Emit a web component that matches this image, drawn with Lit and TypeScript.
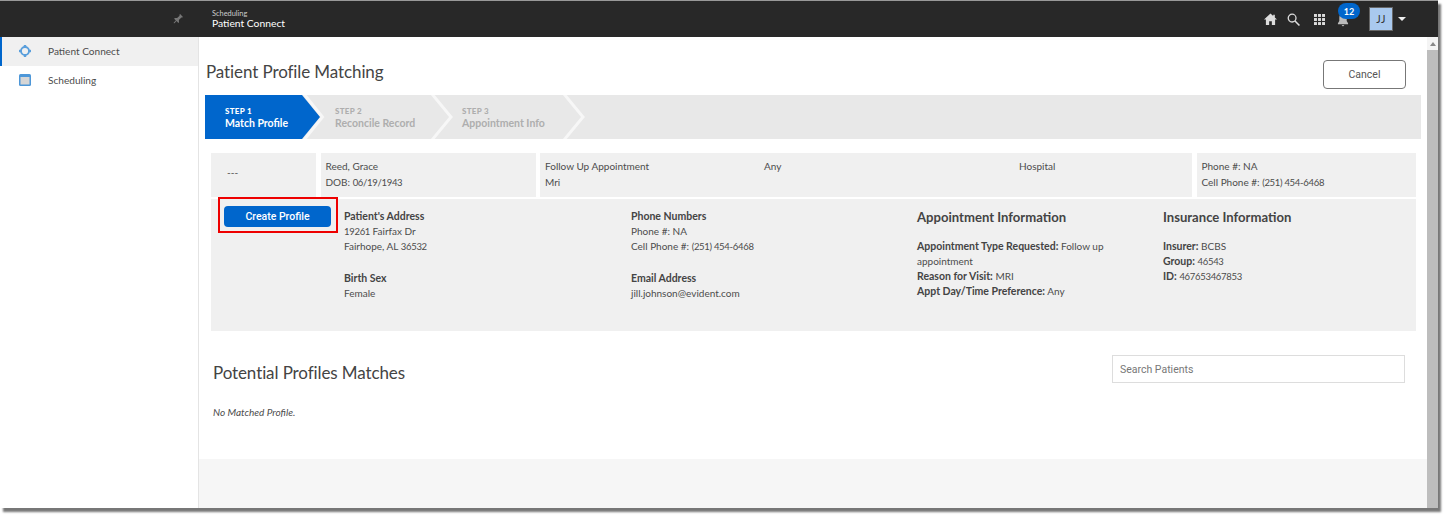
import { LitElement, html, css, svg } from "lit";
import { customElement } from "lit/decorators.js";

const chevron = (blue: boolean) => html`<svg class="chev" width="24" height="44" viewBox="0 0 24 44">
  ${blue ? svg`<polygon points="0,0 18,22 0,44" fill="#0066cc"></polygon>` : ""}
  ${svg`<polyline points="${blue ? "2,-1 20.5,22 2,45" : "2,-1 21,22 2,45"}" fill="none" stroke="#f7f7f7" stroke-width="3"></polyline>`}
</svg>`;

const n = (s: string) => html`<span class="n">${s}</span>`;

@customElement("app-root")
export class AppRoot extends LitElement {
  static styles = css`
    :host { display: block; width: 1448px; height: 518px; background: #fff; overflow: hidden;
      font-family: "Lato", "Noto Sans", sans-serif; color: #4c4c4c; font-size: 10px; }
    * { box-sizing: border-box; }
    .n { font-size: 9.5px; letter-spacing: -0.3px; }
    .window { width: 1438px; height: 508px; display: flex; flex-direction: column; border-top: 1px solid #999;
      box-shadow: 3px 4px 2px #777; background: #fff; }
    .topbar { height: 36px; flex: none; background: #282828; display: flex; align-items: center; color: #fff; }
    .pin-cell { width: 212px; flex: none; display: flex; justify-content: flex-end; padding-right: 28px; }
    .brand { display: flex; flex-direction: column; line-height: 10px; }
    .brand small { font-size: 7.4px; color: #ccc; line-height: 8px; }
    .brand b { font-weight: 400; font-size: 10.3px; line-height: 11px; }
    .tools { margin-left: auto; display: flex; align-items: center; padding-right: 32px; }
    .tool { display: flex; }
    .t-search { margin-left: 10px; }
    .t-grid { margin-left: 14px; }
    .bell { position: relative; display: flex; margin-left: 12px; padding-top: 2px; }
    .badge { position: absolute; left: 1px; top: -8px; width: 22px; height: 16px; border-radius: 8px; background: #0066cc;
      color: #fff; font-size: 9px; font-weight: 700; display: flex; align-items: center; justify-content: center; }
    .avatar { width: 24px; height: 24px; margin-left: 20px; background: #a9c9ee; border: 1.5px solid #666; color: #333;
      font-size: 10.5px; display: flex; align-items: center; justify-content: center; letter-spacing: 0.5px; }
    .caret { width: 0; height: 0; margin-left: 5px; border: 4px solid transparent; border-top: 4px solid #eee; border-bottom: 0; }
    .body { flex: 1; display: flex; min-height: 0; }
    .side { width: 199px; flex: none; border-right: 1px solid #e4e4e4; }
    .nav { height: 29px; display: flex; align-items: center; padding: 0 0 1px 17px; gap: 18px; font-size: 10.1px; border-left: 2px solid transparent; }
    .nav.on { background: #f0f0f0; border-left-color: #0066cc; }
    .nav svg { flex: none; }
    .main { flex: 1; min-width: 0; display: flex; flex-direction: column; }
    .page { flex: 1; padding: 0 6px; }
    .head { height: 58px; display: flex; justify-content: space-between; align-items: flex-start; }
    h1 { margin: 25px 0 0 1px; font-size: 17px; font-weight: 400; line-height: 20px; color: #444; letter-spacing: -0.1px; }
    .cancel { margin: 23px 15px 0 0; width: 83px; height: 29px; border: 1px solid #777; border-radius: 4px; background: #fff;
      color: #555; font: 400 10.5px "Roboto", sans-serif; display: flex; align-items: center; justify-content: center; }
    .stepper { height: 44px; display: flex; background: #e8e8e8; border: 0; color: #aeaeae; }
    .step { display: flex; flex-direction: column; justify-content: center; font-weight: 700; padding-top: 1px; }
    .step small { font-size: 8px; line-height: 11px; letter-spacing: 0.3px; font-weight: 900; margin-top: 1px; }
    .step b { font-size: 10.5px; line-height: 14px; font-weight: 700; margin-top: -1px; }
    .s1 { width: 97px; padding-left: 20px; background: #0066cc; color: #fff; }
    .s2 { width: 104px; padding-left: 9px; }
    .s3 { width: 108px; padding-left: 8px; }
    .chev { flex: none; display: block; }
    .content { padding: 14px 5px 0 6px; }
    .summary { display: grid; grid-template-columns: 105px 215px 652px 1fr; column-gap: 4.5px; height: 44px; }
    .cell { background: #f0f0f0; padding: 5px 5px; line-height: 16px; }
    .dash { padding: 11px 16px; }
    .appt { display: grid; grid-template-columns: 219px 255px 1fr; }
    .detail { margin-top: 2px; height: 132px; background: #f0f0f0; display: flex; align-items: flex-start; }
    .annot { flex: none; width: 120px; height: 36px; margin: -2px 0 0 7px; border: 2px solid #ee0000; padding: 7px 4px; }
    .create { width: 107px; height: 21px; background: #0066cc; border: 0; border-radius: 4px; color: #fff; font: 500 10.5px "Roboto", sans-serif;
      display: flex; align-items: center; justify-content: center; }
    .cols { display: grid; grid-template-columns: 287px 286px 246px 1fr; margin-left: 6px; padding-top: 10px; flex: 1; }
    .col { line-height: 15px; }
    .col b { color: #444; font-weight: 700; font-size: 10.5px; }
    .col p { margin: 0 0 16.5px; }
    h3 { margin: -1px 0 13px; font-size: 13.1px; font-weight: 700; color: #444; line-height: 18px; }
    .col.wrap { padding-right: 30px; }
    .matches { padding: 24px 11px 0 2px; display: flex; justify-content: space-between; align-items: flex-start; }
    h2 { margin: 8px 0 0; font-size: 17px; font-weight: 400; color: #444; letter-spacing: -0.1px; line-height: 20px; }
    input { width: 293px; height: 28px; border: 1px solid #ddd; padding: 0 7px; font: 400 10.5px "Roboto", sans-serif; background: #fff; color: #555; outline: 0; }
    input::placeholder { color: #777; opacity: 1; }
    .none { margin: 23px 0 0 2px; font-style: italic; }
    .foot { height: 49px; flex: none; background: #f6f6f6; }
    .scroll { width: 11px; flex: none; background: #bdbdbd; display: flex; flex-direction: column; }
    .up { height: 13px; background: #f4f4f4; display: flex; align-items: center; justify-content: center; }
    .up i { width: 0; height: 0; border: 3px solid transparent; border-bottom: 4px solid #888; border-top: 0; }
    .mainwrap { flex: 1; display: flex; min-width: 0; }
  `;

  render() {
    return html`<div class="window">
      <header class="topbar">
        <div class="pin-cell">
          <svg width="12" height="12" viewBox="0 0 24 24" fill="#777"><g transform="rotate(45 12 12)"><path d="M8 2h8v2l-1.5 1v7l3.5 3v2h-5v6l-1 1-1-1v-6H6v-2l3.500-3V5L8 4z"/></g></svg>
        </div>
        <div class="brand"><small>Scheduling</small><b>Patient Connect</b></div>
        <div class="tools">
          <span class="tool"><svg width="13" height="12" viewBox="0 0 24 22" fill="#ddd"><path d="M12 1 0 12h3.500v10h6v-7h5v7h6V12H24l-4-3.700V3h-3v2.600z"/></svg></span>
          <span class="tool t-search"><svg width="13" height="13" viewBox="0 0 14 14" fill="none" stroke="#ddd" stroke-width="1.400"><circle cx="5.500" cy="5.500" r="4.200"/><path d="M8.600 8.600 13.400 13.400" stroke-width="1.700"/></svg></span>
          <span class="tool t-grid"><svg width="11" height="11" viewBox="0 0 12 12" fill="#ddd">${[0, 4.4, 8.8].flatMap((x) => [0, 4.4, 8.8].map((y) => svg`<rect x="${x}" y="${y}" width="3.200" height="3.200"/>`))}</svg></span>
          <span class="bell"><svg width="12" height="14" viewBox="0 0 13 14" fill="#bbb"><path d="M6.500 0C4 0 2.500 2 2.500 4.500V8L1 10.500v1h11v-1L10.500 8V4.500C10.500 2 9 0 6.500 0zM5 12.500h3L6.500 14z"/></svg><span class="badge">12</span></span>
          <span class="avatar">JJ</span>
          <span class="caret"></span>
        </div>
      </header>
      <div class="body">
        <aside class="side">
          <div class="nav on">
            <svg width="12" height="12" viewBox="0 0 12 12"><circle cx="6" cy="6" r="4" fill="none" stroke="#5a9fdc" stroke-width="1.800"/><rect x="4.800" y="0" width="2.400" height="2.400" fill="#5a9fdc"/><rect x="4.800" y="9.600" width="2.400" height="2.400" fill="#5a9fdc"/><rect x="0" y="4.800" width="2.400" height="2.400" fill="#5a9fdc"/><rect x="9.600" y="4.800" width="2.400" height="2.400" fill="#5a9fdc"/></svg>
            <span style="margin-left:-1px">Patient Connect</span>
          </div>
          <div class="nav">
            <svg width="12" height="12" viewBox="0 0 12 12"><rect width="12" height="12" rx="1.500" fill="#4d97d8"/><rect x="1.500" y="3" width="9" height="7.500" fill="#d6d6d6"/></svg>
            <span style="margin-left:-1px">Scheduling</span>
          </div>
        </aside>
        <div class="mainwrap">
          <main class="main">
            <div class="page">
              <div class="head"><h1>Patient Profile Matching</h1><button class="cancel">Cancel</button></div>
              <div class="stepper">
                <div class="step s1"><small>STEP 1</small><b>Match Profile</b></div>${chevron(true)}
                <div class="step s2"><small>STEP 2</small><b>Reconcile Record</b></div>${chevron(false)}
                <div class="step s3"><small>STEP 3</small><b>Appointment Info</b></div>${chevron(false)}
              </div>
              <div class="content">
                <div class="summary">
                  <div class="cell dash">---</div>
                  <div class="cell">Reed, Grace<br />DOB: ${n("06/19/1943")}</div>
                  <div class="cell appt"><span>Follow Up Appointment<br />Mri</span><span>Any</span><span>Hospital</span></div>
                  <div class="cell">Phone #: NA<br />Cell Phone #: ${n("(251) 454-6468")}</div>
                </div>
                <div class="detail">
                  <div class="annot"><button class="create">Create Profile</button></div>
                  <div class="cols">
                    <div class="col"><p><b>Patient's Address</b><br />${n("19261")} Fairfax Dr<br />Fairhope, AL ${n("36532")}</p><p><b>Birth Sex</b><br />Female</p></div>
                    <div class="col"><p><b>Phone Numbers</b><br />Phone #: NA<br />Cell Phone #: ${n("(251) 454-6468")}</p><p><b>Email Address</b><br />jill.johnson@evident.com</p></div>
                    <div class="col wrap"><h3>Appointment Information</h3><b>Appointment Type Requested:</b> Follow up appointment<br /><b>Reason for Visit:</b> MRI<br /><b>Appt Day/Time Preference:</b> Any</div>
                    <div class="col"><h3>Insurance Information</h3><b>Insurer:</b> BCBS<br /><b>Group:</b> ${n("46543")}<br /><b>ID:</b> ${n("467653467853")}</div>
                  </div>
                </div>
                <div class="matches"><h2>Potential Profiles Matches</h2><input placeholder="Search Patients" /></div>
                <div class="none">No Matched Profile.</div>
              </div>
            </div>
            <div class="foot"></div>
          </main>
          <div class="scroll"><div class="up"><i></i></div></div>
        </div>
      </div>
    </div>`;
  }
}
